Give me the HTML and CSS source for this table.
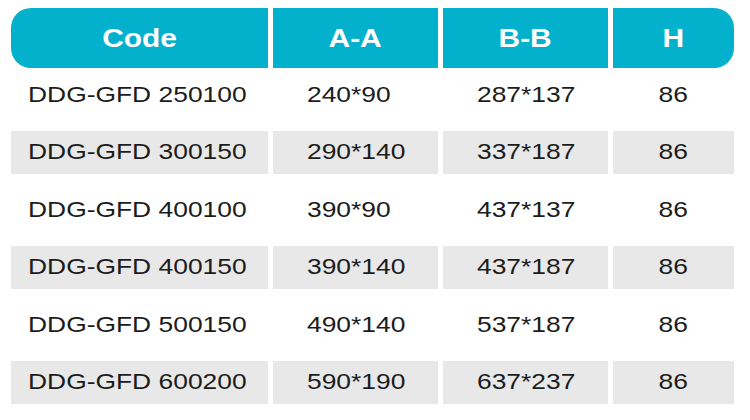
FILE: index.html
```html
<!DOCTYPE html>
<html>
<head>
<meta charset="utf-8">
<link rel="stylesheet" href="styles.css">
</head>
<body>
<div class="table">
  <div class="row head">
    <div class="cell c1"><span>Code</span></div>
    <div class="cell c2"><span>A-A</span></div>
    <div class="cell c3"><span>B-B</span></div>
    <div class="cell c4"><span>H</span></div>
  </div>
  <div class="body">
    <div class="row">
      <div class="cell c1"><span>DDG-GFD 250100</span></div>
      <div class="cell c2"><span>240*90</span></div>
      <div class="cell c3"><span>287*137</span></div>
      <div class="cell c4"><span>86</span></div>
    </div>
    <div class="row alt">
      <div class="cell c1"><span>DDG-GFD 300150</span></div>
      <div class="cell c2"><span>290*140</span></div>
      <div class="cell c3"><span>337*187</span></div>
      <div class="cell c4"><span>86</span></div>
    </div>
    <div class="row">
      <div class="cell c1"><span>DDG-GFD 400100</span></div>
      <div class="cell c2"><span>390*90</span></div>
      <div class="cell c3"><span>437*137</span></div>
      <div class="cell c4"><span>86</span></div>
    </div>
    <div class="row alt">
      <div class="cell c1"><span>DDG-GFD 400150</span></div>
      <div class="cell c2"><span>390*140</span></div>
      <div class="cell c3"><span>437*187</span></div>
      <div class="cell c4"><span>86</span></div>
    </div>
    <div class="row">
      <div class="cell c1"><span>DDG-GFD 500150</span></div>
      <div class="cell c2"><span>490*140</span></div>
      <div class="cell c3"><span>537*187</span></div>
      <div class="cell c4"><span>86</span></div>
    </div>
    <div class="row alt">
      <div class="cell c1"><span>DDG-GFD 600200</span></div>
      <div class="cell c2"><span>590*190</span></div>
      <div class="cell c3"><span>637*237</span></div>
      <div class="cell c4"><span>86</span></div>
    </div>
  </div>
</div>
</body>
</html>
```
FILE: styles.css
```css
html, body {
  margin: 0;
  padding: 0;
  background: #ffffff;
}
body {
  font-family: "Liberation Sans", Arial, sans-serif;
  color: #1c1c1c;
}
.table {
  width: 723px;
  padding: 8px 0 0 11px;
}
.row {
  display: grid;
  grid-template-columns: 257px 165px 165px 121px;
  column-gap: 5px;
  height: 42.5px;
}
.head {
  height: 60px;
  margin-bottom: 5.5px;
}
.body {
  display: flex;
  flex-direction: column;
  gap: 15px;
}
.cell {
  display: flex;
  align-items: center;
  overflow: hidden;
}
.cell span {
  display: inline-block;
  font-size: 22px;
  line-height: 1;
  transform: scaleX(1.2);
  transform-origin: left center;
  white-space: nowrap;
}
.body .c1 { padding-left: 17px; }
.body .c2, .body .c3 { padding-left: 34px; }
.body .c4 { justify-content: center; }
.body .c4 span { transform-origin: center center; }
.alt .cell {
  background: #e8e8e8;
}
.head .cell {
  background: #03b1cc;
  justify-content: center;
  color: #ffffff;
}
.head .cell span {
  font-size: 26px;
  font-weight: bold;
  transform: scaleX(1.15);
  transform-origin: center center;
}
.head .c1 {
  border-radius: 20px 0 0 20px;
}
.head .c4 {
  border-radius: 0 20px 20px 0;
}
```
